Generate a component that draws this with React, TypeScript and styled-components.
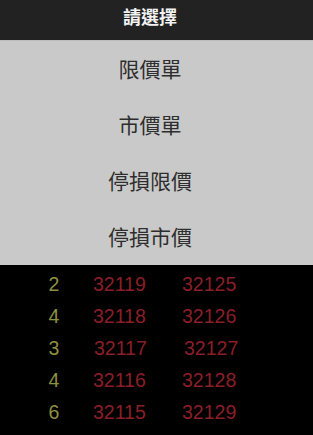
import React from "react";
import styled, { createGlobalStyle } from "styled-components";

const Global = createGlobalStyle`
  html, body { margin: 0; padding: 0; background: #000; }
  body { font-family: "Noto Sans CJK TC", "Noto Sans CJK SC", sans-serif; }
  #root { width: 313px; height: 435px; overflow: hidden; }
`;

const Screen = styled.div`
  width: 313px;
  height: 435px;
  display: flex;
  flex-direction: column;
  background: #000;
`;

const Header = styled.div`
  height: 40px;
  padding: 0 13px 8px 0;
  box-sizing: border-box;
  background: #222222;
  display: flex;
  align-items: center;
  justify-content: center;
  color: #f2f2f2;
  font-size: 18px;
  font-weight: 700;
  font-family: "Noto Sans CJK TC", sans-serif;
`;

const Menu = styled.div`
  background: #c9c9c9;
  display: flex;
  flex-direction: column;
  border-top: 1px solid #bdbdbd;
`;

const Option = styled.div`
  height: 56px;
  padding: 0 13px 3px 0;
  box-sizing: border-box;
  display: flex;
  align-items: center;
  justify-content: center;
  color: #2e2e2e;
  font-size: 21px;
  font-family: "Noto Sans CJK TC", sans-serif;
`;

const Quotes = styled.div`
  flex: 1;
  padding-top: 3px;
  display: flex;
  flex-direction: column;
`;

const Row = styled.div`
  height: 32px;
  padding-left: 44px;
  display: grid;
  grid-template-columns: 20px 60px 80px;
  column-gap: 29px;
  align-items: center;
  font-family: "Liberation Sans", Arial, sans-serif;
  font-size: 19.5px;
`;

const Qty = styled.span`
  color: #8e9140;
  text-align: center;
`;

const Price = styled.span<{ $shift?: number }>`
  color: #8a1f27;
  padding-left: ${(p) => p.$shift ?? 0}px;
`;

const options = ["限價單", "市價單", "停損限價", "停損市價"];
const rows = [
  { q: "2", a: "32119", b: "32125" },
  { q: "4", a: "32118", b: "32126" },
  { q: "3", a: "32117", b: "32127" },
  { q: "4", a: "32116", b: "32128" },
  { q: "6", a: "32115", b: "32129" },
];

export default function App() {
  return (
    <Screen>
      <Global />
      <Header>請選擇</Header>
      <Menu>
        {options.map((o) => (
          <Option key={o}>{o}</Option>
        ))}
      </Menu>
      <Quotes>
        {rows.map((r, i) => (
          <Row key={i}>
            <Qty>{r.q}</Qty>
            <Price $shift={r.a === "32117" ? 1 : 0}>{r.a}</Price>
            <Price $shift={r.b === "32127" ? 2 : 0}>{r.b}</Price>
          </Row>
        ))}
      </Quotes>
    </Screen>
  );
}
